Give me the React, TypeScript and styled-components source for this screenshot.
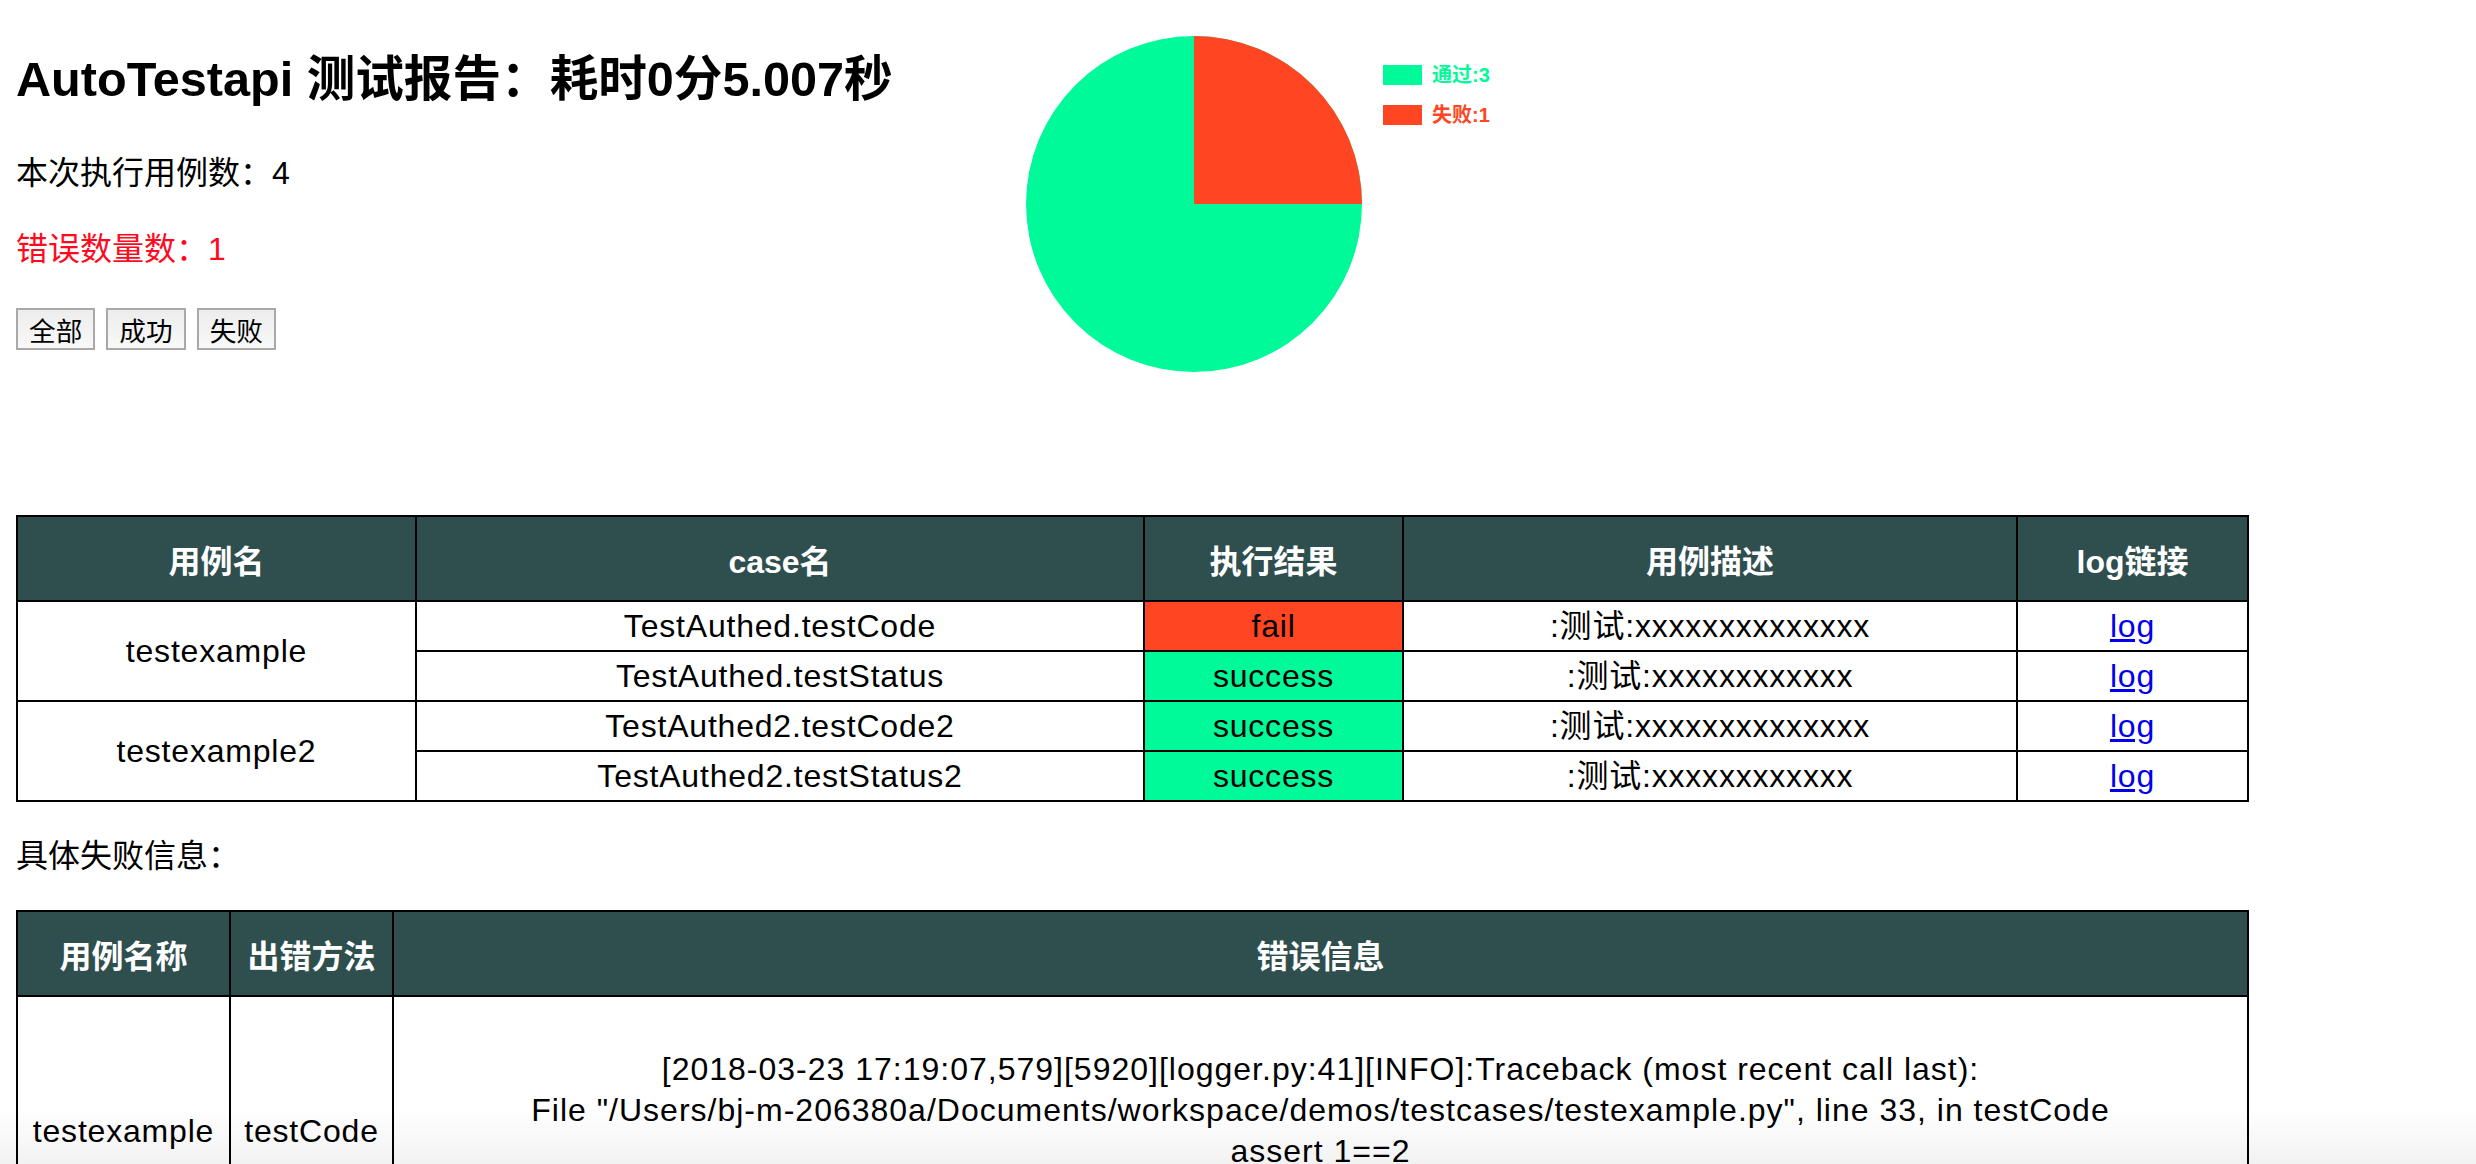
import styled, { createGlobalStyle } from 'styled-components';

// PARAM data
const cases = [
  {
    name: 'testexample',
    items: [
      { method: 'TestAuthed.testCode', result: 'fail', desc: ':测试:xxxxxxxxxxxxxx' },
      { method: 'TestAuthed.testStatus', result: 'success', desc: ':测试:xxxxxxxxxxxx' },
    ],
  },
  {
    name: 'testexample2',
    items: [
      { method: 'TestAuthed2.testCode2', result: 'success', desc: ':测试:xxxxxxxxxxxxxx' },
      { method: 'TestAuthed2.testStatus2', result: 'success', desc: ':测试:xxxxxxxxxxxx' },
    ],
  },
];

const errorLines = [
  '[2018-03-23 17:19:07,579][5920][logger.py:41][INFO]:Traceback (most recent call last):',
  'File "/Users/bj-m-206380a/Documents/workspace/demos/testcases/testexample.py", line 33, in testCode',
  'assert 1==2',
  'AssertionError',
];

const GREEN = '#00fa9a';
const RED = '#ff4522';

// COMPONENT pie chart with legend
const PieView = () => {
  const cx = 178;
  const cy = 204;
  const r = 168;
  return (
    <Report.Chart width='540' height='400' viewBox='0 0 540 400'>
      <circle cx={cx} cy={cy} r={r} fill={GREEN} />
      <path d={`M${cx} ${cy} L${cx} ${cy - r} A${r} ${r} 0 0 1 ${cx + r} ${cy} Z`} fill={RED} />
      <rect x='367' y='65' width='39' height='20' fill={GREEN} />
      <text x='416' y='82' fill={GREEN} fontSize='20' fontWeight='bold' fontFamily='"Liberation Sans", "Noto Sans CJK SC", sans-serif'>
        通过:3
      </text>
      <rect x='367' y='105' width='39' height='20' fill={RED} />
      <text x='416' y='122' fill={RED} fontSize='20' fontWeight='bold' fontFamily='"Liberation Sans", "Noto Sans CJK SC", sans-serif'>
        失败:1
      </text>
    </Report.Chart>
  );
};

// COMPONENT summary table
const SummaryView = () => {
  return (
    <Report.Table $top={115}>
      <colgroup>
        <col style={{ width: 399 }} />
        <col style={{ width: 728 }} />
        <col style={{ width: 259 }} />
        <col style={{ width: 614 }} />
        <col style={{ width: 231 }} />
      </colgroup>
      <thead>
        <tr>
          <Report.Head>用例名</Report.Head>
          <Report.Head>case名</Report.Head>
          <Report.Head>执行结果</Report.Head>
          <Report.Head>用例描述</Report.Head>
          <Report.Head>log链接</Report.Head>
        </tr>
      </thead>
      <tbody>
        {cases.map((group) =>
          group.items.map((item, i) => (
            <tr key={item.method}>
              {i === 0 && <Report.Cell rowSpan={group.items.length}>{group.name}</Report.Cell>}
              <Report.Cell>{item.method}</Report.Cell>
              <Report.Cell $status={item.result}>{item.result}</Report.Cell>
              <Report.Cell>{item.desc}</Report.Cell>
              <Report.Cell>
                <Report.Link href='#'>log</Report.Link>
              </Report.Cell>
            </tr>
          ))
        )}
      </tbody>
    </Report.Table>
  );
};

// COMPONENT failure detail table
const FailureView = () => {
  return (
    <Report.Table $top={32}>
      <colgroup>
        <col style={{ width: 213 }} />
        <col style={{ width: 163 }} />
        <col style={{ width: 1855 }} />
      </colgroup>
      <thead>
        <tr>
          <Report.Head>用例名称</Report.Head>
          <Report.Head>出错方法</Report.Head>
          <Report.Head>错误信息</Report.Head>
        </tr>
      </thead>
      <tbody>
        <tr>
          <Report.Cell>testexample</Report.Cell>
          <Report.Cell>testCode</Report.Cell>
          <Report.Message>
            {errorLines.map((line) => (
              <div key={line}>{line}</div>
            ))}
          </Report.Message>
        </tr>
      </tbody>
    </Report.Table>
  );
};

// COMPONENT report page
const App = () => {
  return (
    <>
      <GlobalStyle />
      <Report.Page>
        <Report.Top>
          <Report.Info>
            <Report.Title>AutoTestapi 测试报告：耗时0分5.007秒</Report.Title>
            <Report.Line $top={40}>本次执行用例数：4</Report.Line>
            <Report.Line $error>错误数量数：1</Report.Line>
            <Report.Actions>
              <Report.Button>全部</Report.Button>
              <Report.Button>成功</Report.Button>
              <Report.Button>失败</Report.Button>
            </Report.Actions>
          </Report.Info>
          <PieView />
        </Report.Top>
        <SummaryView />
        <Report.Line $top={32}>具体失败信息：</Report.Line>
        <FailureView />
      </Report.Page>
      <Report.Shade />
    </>
  );
};

// PARAM style
const GlobalStyle = createGlobalStyle`
  html, body {
    margin: 0;
    background: #fff;
  }
  body {
    font-family: "Liberation Sans", "Noto Sans CJK SC", sans-serif;
    color: #000;
  }
`;

const Report = {
  Page: styled.div`
    padding: 0 16px 60px;
  `,
  Top: styled.section`
    display: flex;
    align-items: flex-start;
  `,
  Info: styled.div`
    width: 1000px;
    flex: 0 0 auto;
  `,
  Title: styled.h2`
    margin: 47px 0 0;
    font-size: 48.6px;
    line-height: 64px;
    font-weight: bold;
  `,
  Line: styled.p<{ $error?: boolean; $top?: number }>`
    margin: ${({ $top }) => $top ?? 32}px 0 0;
    font-size: 32px;
    line-height: 44px;
    color: ${({ $error }) => ($error ? '#ff0a1e' : '#000')};
  `,
  Actions: styled.div`
    display: flex;
    gap: 11px;
    margin-top: 37px;
  `,
  Button: styled.button`
    height: 42px;
    padding: 0 11px;
    border: 2px solid #a9a9a9;
    border-radius: 0;
    background: linear-gradient(#ededed, #f8f8f8);
    font-family: inherit;
    font-size: 26.67px;
    color: #000;
  `,
  Chart: styled.svg`
    flex: 0 0 auto;
    display: block;
  `,
  Table: styled.table<{ $top: number }>`
    width: 2231px;
    margin-top: ${({ $top }) => $top}px;
    border-collapse: collapse;
    table-layout: fixed;
    font-size: 32px;
  `,
  Head: styled.th`
    height: 83px;
    padding: 0;
    border: 2px solid #000;
    background: #2f4f4f;
    color: #fff;
    font-weight: bold;
    text-align: center;
  `,
  Cell: styled.td<{ $status?: string }>`
    height: 48px;
    padding: 0;
    border: 2px solid #000;
    line-height: 40px;
    letter-spacing: 0.8px;
    text-align: center;
    vertical-align: middle;
    background: ${({ $status }) =>
      $status === 'fail' ? RED : $status === 'success' ? GREEN : 'transparent'};
  `,
  Message: styled.td`
    padding: 52px 0;
    border: 2px solid #000;
    line-height: 41px;
    letter-spacing: 1px;
    text-align: center;
    vertical-align: middle;
  `,
  Link: styled.a`
    color: #0000ee;
    text-decoration: underline;
  `,
  Shade: styled.div`
    position: fixed;
    left: 0;
    right: 0;
    bottom: 0;
    height: 56px;
    pointer-events: none;
    background: linear-gradient(to bottom, rgba(0, 0, 0, 0), rgba(0, 0, 0, 0.05));
  `,
};

export default App;
